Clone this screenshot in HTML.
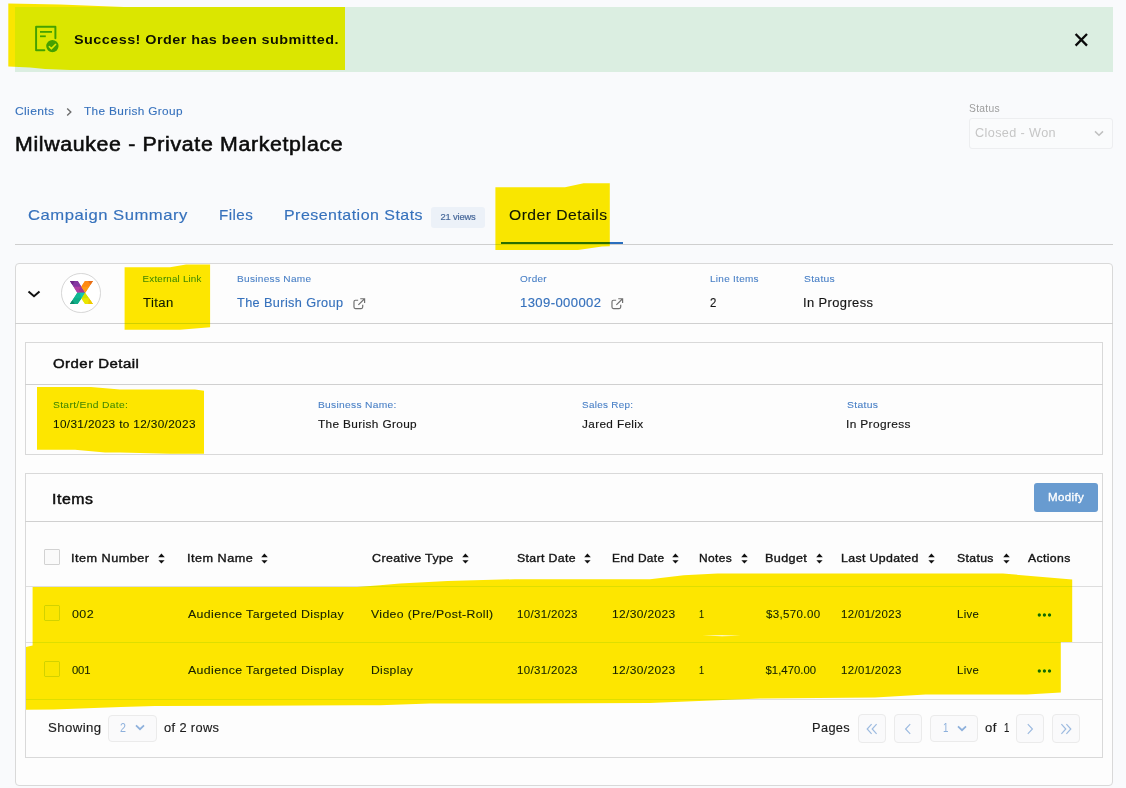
<!DOCTYPE html>
<html lang="en"><head><meta charset="utf-8"><title>Milwaukee - Private Marketplace</title>
<style>
html,body{margin:0;padding:0}
body{width:1126px;height:788px;position:relative;overflow:hidden;background:#f9fafc;font-family:"Liberation Sans",sans-serif;}
.t{position:absolute;white-space:nowrap;line-height:1;transform-origin:0 0;}
.b{position:absolute;box-sizing:border-box;}
.a{position:absolute;overflow:visible;}
.card{position:absolute;box-sizing:border-box;background:#fdfdfd;border:1px solid #d9d9d9;}
.ln{position:absolute;height:1px;background:#dedede;}
.cb{position:absolute;box-sizing:border-box;width:16px;height:16px;border:1px solid #d2d2d2;border-radius:1px;background:#fafafa;}
.pb{position:absolute;box-sizing:border-box;border:1px solid #ebebeb;border-radius:4px;background:#fafafb;}
</style></head><body>

<!-- success banner -->
<div class="b" style="left:15px;top:7px;width:1098px;height:65px;background:#dbeee1"></div>
<svg class="a" style="left:34px;top:24px" width="28" height="30" viewBox="0 0 28 30">
 <path d="M10.4 26.2 H2.1 V2.7 H21.4 V14.3" fill="none" stroke="#46a046" stroke-width="2" stroke-linejoin="round" stroke-linecap="round"/>
 <path d="M6 7.9 H18" stroke="#46a046" stroke-width="1.8"/><path d="M6 12.3 H11.8" stroke="#46a046" stroke-width="1.8"/>
 <circle cx="18.4" cy="22.1" r="6.2" fill="#46a046"/>
 <path d="M14.9 22.3 L17.4 24.6 L22 19.9" fill="none" stroke="#e4f3e6" stroke-width="1.5"/>
</svg>
<svg class="a" style="left:1074px;top:32px" width="15" height="15" viewBox="0 0 15 15"><path d="M1.6 2 L13 13.6 M13 2 L1.6 13.6" stroke="#0a0a0a" stroke-width="2.3" fill="none"/></svg>
<!-- breadcrumb chevron -->
<svg class="a" style="left:66px;top:107px" width="7" height="10" viewBox="0 0 7 10"><path d="M1.2 1.6 L4.8 5 L1.2 8.4" stroke="#6d6d6d" stroke-width="1.4" fill="none"/></svg>
<!-- status select -->
<div class="b" style="left:969px;top:118px;width:144px;height:31px;border:1px solid #edeef0;border-radius:3px;background:#fafbfc"></div>
<svg class="a" style="left:1094px;top:130px" width="10" height="7" viewBox="0 0 10 7"><path d="M1 1.4 L5 5.2 L9 1.4" stroke="#c0c0c0" stroke-width="1.5" fill="none"/></svg>
<!-- tabs -->
<div class="ln" style="left:15px;top:244px;width:1098px;background:#cfcfcf"></div>
<div class="b" style="left:431px;top:207px;width:54px;height:21px;border-radius:3px;background:#ecf1f8"></div>
<div class="b" style="left:501.3px;top:242px;width:121.6px;height:2.4px;background:#2a6ebe"></div>
<!-- order card -->
<div class="card" style="left:15px;top:263px;width:1098px;height:523px;border-radius:4px"></div>
<div class="ln" style="left:15px;top:323px;width:1098px;background:#d0d0d0"></div>
<svg class="a" style="left:27px;top:289px" width="14" height="9" viewBox="0 0 14 9"><path d="M1.5 2.4 L7 7.2 L12.5 2.4" stroke="#111" stroke-width="2" fill="none"/></svg>
<div class="b" style="left:61.3px;top:273.3px;width:39.6px;height:39.6px;border-radius:50%;border:1.6px solid #d6d6d6;background:#fff"></div>
<svg class="a" style="left:69.8px;top:280.9px" width="22.9" height="23.1" viewBox="0 0 100 100">
 <polygon points="0,0 34,0 65.5,50.5 32,50.5" fill="#9a3aa1"/>
 <polygon points="65.5,0 100,0 66.5,50.5 49.3,24.5" fill="#ff9012"/>
 <polygon points="32,50.5 65.5,50.5 33.3,100 0,100" fill="#11b38d"/>
 <polygon points="65.5,50.5 100,100 66,100 50,76" fill="#dde400"/>
 <polygon points="0,0 34,0 49.5,25 16,25" fill="#8436a0"/>
 <polygon points="0,0 21,0 10.5,16.5" fill="#6f2587"/>
 <polygon points="16,25 49.5,25 65.5,50.5 32,50.5" fill="#b03fa2"/>
 <polygon points="49.5,25 65.5,50.5 45,50.5 38,38" fill="#a5368f"/>
 <polygon points="65.5,0 100,0 83.5,25 49.3,24.5" fill="#ff8a12"/>
 <polygon points="79,0 100,0 89.5,16" fill="#e56d1c"/>
 <polygon points="49.3,24.5 83.5,25 66.5,50.5" fill="#ff9b12"/>
 <polygon points="32,50.5 65.5,50.5 50,76 16.5,75" fill="#12b893"/>
 <polygon points="42,50.5 65.5,50.5 50,76" fill="#10c5b5"/>
 <polygon points="16.5,75 50,76 33.3,100 0,100" fill="#10ae88"/>
 <polygon points="0,100 21,100 10.5,84" fill="#0a8c6c"/>
 <polygon points="65.5,50.5 83,75 50,76" fill="#d0e100"/>
 <polygon points="50,76 83,75 100,100 66,100" fill="#eae700"/>
 <polygon points="83,75 100,100 79,100" fill="#f1c700"/>
</svg>
<svg class="a ext" style="left:352.8px;top:298.2px" width="12.4" height="11.4" viewBox="0 0 13 12"><path d="M5.4 2.4 H2.6 Q1 2.4 1 4 V9.6 Q1 11.2 2.6 11.2 H8.6 Q10.2 11.2 10.2 9.6 V7.2 M7.6 0.8 H12.2 V5.2 M12.2 0.8 L5.6 7.2" stroke="#707070" stroke-width="1.25" fill="none"/></svg>
<svg class="a ext" style="left:611.1px;top:298.2px" width="12.4" height="11.4" viewBox="0 0 13 12"><path d="M5.4 2.4 H2.6 Q1 2.4 1 4 V9.6 Q1 11.2 2.6 11.2 H8.6 Q10.2 11.2 10.2 9.6 V7.2 M7.6 0.8 H12.2 V5.2 M12.2 0.8 L5.6 7.2" stroke="#707070" stroke-width="1.25" fill="none"/></svg>
<!-- order detail card -->
<div class="card" style="left:25px;top:342px;width:1078px;height:113px"></div>
<div class="ln" style="left:25px;top:384px;width:1078px;background:#d0d0d0"></div>
<!-- items card -->
<div class="card" style="left:25px;top:473px;width:1078px;height:285px"></div>
<div class="ln" style="left:25px;top:521px;width:1078px;background:#d0d0d0"></div>
<div class="b" style="left:1034px;top:483px;width:64px;height:29px;border-radius:3px;background:#689bd0"></div>
<div class="ln" style="left:26px;top:586px;width:1076px"></div>
<div class="ln" style="left:26px;top:642px;width:1076px"></div>
<div class="ln" style="left:26px;top:699px;width:1076px"></div>
<div class="cb" style="left:44px;top:549px"></div>
<div class="cb" style="left:44px;top:605px"></div>
<div class="cb" style="left:44px;top:661px"></div>
<!-- action dots -->
<svg class="a" style="left:1036.7px;top:612px" width="15" height="6" viewBox="0 0 15 6"><circle cx="2.3" cy="3" r="1.7" fill="#17680f"/><circle cx="7.4" cy="3" r="1.7" fill="#17680f"/><circle cx="12.5" cy="3" r="1.7" fill="#17680f"/></svg>
<svg class="a" style="left:1036.7px;top:668px" width="15" height="6" viewBox="0 0 15 6"><circle cx="2.3" cy="3" r="1.7" fill="#17680f"/><circle cx="7.4" cy="3" r="1.7" fill="#17680f"/><circle cx="12.5" cy="3" r="1.7" fill="#17680f"/></svg>
<!-- footer controls -->
<div class="pb" style="left:108px;top:715px;width:49px;height:27px"></div>
<svg class="a" style="left:134.5px;top:724px" width="10" height="7" viewBox="0 0 10 7"><path d="M1 1.3 L5 5.2 L9 1.3" stroke="#8db0dc" stroke-width="1.7" fill="none"/></svg>
<div class="pb" style="left:858px;top:714px;width:28px;height:29px"></div>
<div class="pb" style="left:894px;top:714px;width:28px;height:29px"></div>
<div class="pb" style="left:930px;top:715px;width:48px;height:27px"></div>
<div class="pb" style="left:1016px;top:714px;width:28px;height:29px"></div>
<div class="pb" style="left:1052px;top:714px;width:28px;height:29px"></div>
<svg class="a" style="left:866px;top:723px" width="12" height="12" viewBox="0 0 12 12"><path d="M5.6 1.2 L1.2 6 L5.6 10.8 M10.6 1.2 L6.2 6 L10.6 10.8" stroke="#9dbbe0" stroke-width="1.2" fill="none"/></svg>
<svg class="a" style="left:904px;top:723px" width="8" height="12" viewBox="0 0 8 12"><path d="M6.2 1.2 L1.6 6 L6.2 10.8" stroke="#9dbbe0" stroke-width="1.2" fill="none"/></svg>
<svg class="a" style="left:956.5px;top:724.5px" width="10" height="7" viewBox="0 0 10 7"><path d="M1 1.3 L5 5.2 L9 1.3" stroke="#8db0dc" stroke-width="1.7" fill="none"/></svg>
<svg class="a" style="left:1026px;top:723px" width="8" height="12" viewBox="0 0 8 12"><path d="M1.8 1.2 L6.4 6 L1.8 10.8" stroke="#9dbbe0" stroke-width="1.2" fill="none"/></svg>
<svg class="a" style="left:1060px;top:723px" width="12" height="12" viewBox="0 0 12 12"><path d="M1.4 1.2 L5.8 6 L1.4 10.8 M6.4 1.2 L10.8 6 L6.4 10.8" stroke="#9dbbe0" stroke-width="1.2" fill="none"/></svg>

<svg class="a" style="left:158.2px;top:552.5px" width="7" height="11.5" viewBox="0 0 7 11.5"><path d="M3.4 0.6 L6.8 4.2 H0.2 Z M0.4 7.3 H6.6 L3.4 10.5 Z" fill="#111"/></svg>
<svg class="a" style="left:261.1px;top:552.5px" width="7" height="11.5" viewBox="0 0 7 11.5"><path d="M3.4 0.6 L6.8 4.2 H0.2 Z M0.4 7.3 H6.6 L3.4 10.5 Z" fill="#111"/></svg>
<svg class="a" style="left:462.1px;top:552.5px" width="7" height="11.5" viewBox="0 0 7 11.5"><path d="M3.4 0.6 L6.8 4.2 H0.2 Z M0.4 7.3 H6.6 L3.4 10.5 Z" fill="#111"/></svg>
<svg class="a" style="left:583.6px;top:552.5px" width="7" height="11.5" viewBox="0 0 7 11.5"><path d="M3.4 0.6 L6.8 4.2 H0.2 Z M0.4 7.3 H6.6 L3.4 10.5 Z" fill="#111"/></svg>
<svg class="a" style="left:671.6px;top:552.5px" width="7" height="11.5" viewBox="0 0 7 11.5"><path d="M3.4 0.6 L6.8 4.2 H0.2 Z M0.4 7.3 H6.6 L3.4 10.5 Z" fill="#111"/></svg>
<svg class="a" style="left:741.0px;top:552.5px" width="7" height="11.5" viewBox="0 0 7 11.5"><path d="M3.4 0.6 L6.8 4.2 H0.2 Z M0.4 7.3 H6.6 L3.4 10.5 Z" fill="#111"/></svg>
<svg class="a" style="left:815.6px;top:552.5px" width="7" height="11.5" viewBox="0 0 7 11.5"><path d="M3.4 0.6 L6.8 4.2 H0.2 Z M0.4 7.3 H6.6 L3.4 10.5 Z" fill="#111"/></svg>
<svg class="a" style="left:927.8px;top:552.5px" width="7" height="11.5" viewBox="0 0 7 11.5"><path d="M3.4 0.6 L6.8 4.2 H0.2 Z M0.4 7.3 H6.6 L3.4 10.5 Z" fill="#111"/></svg>
<svg class="a" style="left:1002.5px;top:552.5px" width="7" height="11.5" viewBox="0 0 7 11.5"><path d="M3.4 0.6 L6.8 4.2 H0.2 Z M0.4 7.3 H6.6 L3.4 10.5 Z" fill="#111"/></svg>
<div class="t" style="left:73.5px;top:33px;font-size:13.5px;color:#111;letter-spacing:0.41px;font-weight:700;transform:scaleX(1.068);">Success! Order has been submitted.</div>
<div class="t" style="left:15.3px;top:106px;font-size:11.4px;color:#3671bc;letter-spacing:0.34px;transform:scaleX(1.060);-webkit-text-stroke:0.1px #3671bc;">Clients</div>
<div class="t" style="left:84.4px;top:106px;font-size:11.4px;color:#3671bc;letter-spacing:0.34px;transform:scaleX(1.037);-webkit-text-stroke:0.1px #3671bc;">The Burish Group</div>
<div class="t" style="left:14.9px;top:135px;font-size:19.5px;color:#0c0c0c;letter-spacing:0.59px;transform:scaleX(1.094);-webkit-text-stroke:0.55px #0c0c0c;">Milwaukee - Private Marketplace</div>
<div class="t" style="left:969.3px;top:104px;font-size:10.1px;color:#9d9d9d;letter-spacing:0.30px;transform:scaleX(1.020);">Status</div>
<div class="t" style="left:975.3px;top:128px;font-size:11.9px;color:#c6c6c6;letter-spacing:0.36px;transform:scaleX(1.064);">Closed - Won</div>
<div class="t" style="left:27.5px;top:208px;font-size:14.8px;color:#3671bc;letter-spacing:0.44px;transform:scaleX(1.126);-webkit-text-stroke:0.15px #3671bc;">Campaign Summary</div>
<div class="t" style="left:218.6px;top:208px;font-size:14.8px;color:#3671bc;letter-spacing:0.44px;transform:scaleX(1.025);-webkit-text-stroke:0.15px #3671bc;">Files</div>
<div class="t" style="left:283.7px;top:208px;font-size:14.8px;color:#3671bc;letter-spacing:0.44px;transform:scaleX(1.079);-webkit-text-stroke:0.15px #3671bc;">Presentation Stats</div>
<div class="t" style="left:440.4px;top:212px;font-size:9.4px;color:#48699b;letter-spacing:-0.16px;-webkit-text-stroke:0.2px #48699b;">21 views</div>
<div class="t" style="left:509.2px;top:208px;font-size:14.8px;color:#141414;letter-spacing:0.44px;transform:scaleX(1.061);-webkit-text-stroke:0.15px #141414;">Order Details</div>
<div class="t" style="left:142.6px;top:274px;font-size:9.8px;color:#4a80c6;letter-spacing:0.18px;-webkit-text-stroke:0.1px #4a80c6;">External Link</div>
<div class="t" style="left:237.0px;top:274px;font-size:9.8px;color:#4a80c6;letter-spacing:0.29px;transform:scaleX(1.028);-webkit-text-stroke:0.1px #4a80c6;">Business Name</div>
<div class="t" style="left:520.2px;top:274px;font-size:9.8px;color:#4a80c6;letter-spacing:0.29px;transform:scaleX(1.016);-webkit-text-stroke:0.1px #4a80c6;">Order</div>
<div class="t" style="left:709.6px;top:274px;font-size:9.8px;color:#4a80c6;letter-spacing:0.29px;transform:scaleX(1.016);-webkit-text-stroke:0.1px #4a80c6;">Line Items</div>
<div class="t" style="left:803.7px;top:274px;font-size:9.8px;color:#4a80c6;letter-spacing:0.29px;transform:scaleX(1.053);-webkit-text-stroke:0.1px #4a80c6;">Status</div>
<div class="t" style="left:142.6px;top:297px;font-size:12.5px;color:#161616;letter-spacing:0.38px;transform:scaleX(1.049);-webkit-text-stroke:0.15px #161616;">Titan</div>
<div class="t" style="left:237.0px;top:297px;font-size:12.5px;color:#3671bc;letter-spacing:0.38px;transform:scaleX(1.016);-webkit-text-stroke:0.15px #3671bc;">The Burish Group</div>
<div class="t" style="left:520.2px;top:297px;font-size:12.5px;color:#3671bc;letter-spacing:0.38px;transform:scaleX(1.045);-webkit-text-stroke:0.15px #3671bc;">1309-000002</div>
<div class="t" style="left:709.6px;top:297px;font-size:12.5px;color:#161616;transform:scaleX(0.914);-webkit-text-stroke:0.15px #161616;">2</div>
<div class="t" style="left:802.7px;top:297px;font-size:12.5px;color:#161616;letter-spacing:0.38px;transform:scaleX(1.033);-webkit-text-stroke:0.15px #161616;">In Progress</div>
<div class="t" style="left:53.2px;top:357px;font-size:13.7px;color:#0e0e0e;letter-spacing:0.41px;transform:scaleX(1.096);-webkit-text-stroke:0.45px #0e0e0e;">Order Detail</div>
<div class="t" style="left:53.0px;top:400px;font-size:9.8px;color:#4a80c6;letter-spacing:0.29px;transform:scaleX(1.054);-webkit-text-stroke:0.1px #4a80c6;">Start/End Date:</div>
<div class="t" style="left:318.0px;top:400px;font-size:9.8px;color:#4a80c6;letter-spacing:0.29px;transform:scaleX(1.044);-webkit-text-stroke:0.1px #4a80c6;">Business Name:</div>
<div class="t" style="left:582.1px;top:400px;font-size:9.8px;color:#4a80c6;letter-spacing:0.29px;transform:scaleX(1.009);-webkit-text-stroke:0.1px #4a80c6;">Sales Rep:</div>
<div class="t" style="left:846.6px;top:400px;font-size:9.8px;color:#4a80c6;letter-spacing:0.29px;transform:scaleX(1.060);-webkit-text-stroke:0.1px #4a80c6;">Status</div>
<div class="t" style="left:53.0px;top:419px;font-size:11.3px;color:#161616;letter-spacing:0.34px;transform:scaleX(1.043);-webkit-text-stroke:0.15px #161616;">10/31/2023 to 12/30/2023</div>
<div class="t" style="left:318.0px;top:419px;font-size:11.3px;color:#161616;letter-spacing:0.34px;transform:scaleX(1.047);-webkit-text-stroke:0.15px #161616;">The Burish Group</div>
<div class="t" style="left:582.0px;top:419px;font-size:11.3px;color:#161616;letter-spacing:0.34px;transform:scaleX(1.043);-webkit-text-stroke:0.15px #161616;">Jared Felix</div>
<div class="t" style="left:845.5px;top:419px;font-size:11.3px;color:#161616;letter-spacing:0.34px;transform:scaleX(1.054);-webkit-text-stroke:0.15px #161616;">In Progress</div>
<div class="t" style="left:52.1px;top:493px;font-size:13.8px;color:#0e0e0e;letter-spacing:0.49px;transform:scaleX(1.150);-webkit-text-stroke:0.45px #0e0e0e;">Items</div>
<div class="t" style="left:1047.6px;top:492px;font-size:10.9px;color:#fff;letter-spacing:0.33px;transform:scaleX(1.062);-webkit-text-stroke:0.3px #fff;">Modify</div>
<div class="t" style="left:70.5px;top:553px;font-size:11.0px;color:#141414;letter-spacing:0.42px;transform:scaleX(1.150);-webkit-text-stroke:0.35px #141414;">Item Number</div>
<div class="t" style="left:186.5px;top:553px;font-size:11.0px;color:#141414;letter-spacing:0.43px;transform:scaleX(1.150);-webkit-text-stroke:0.35px #141414;">Item Name</div>
<div class="t" style="left:371.5px;top:553px;font-size:11.0px;color:#141414;letter-spacing:0.33px;transform:scaleX(1.135);-webkit-text-stroke:0.35px #141414;">Creative Type</div>
<div class="t" style="left:516.6px;top:553px;font-size:11.0px;color:#141414;letter-spacing:0.33px;transform:scaleX(1.117);-webkit-text-stroke:0.35px #141414;">Start Date</div>
<div class="t" style="left:611.5px;top:553px;font-size:11.0px;color:#141414;letter-spacing:0.33px;transform:scaleX(1.082);-webkit-text-stroke:0.35px #141414;">End Date</div>
<div class="t" style="left:698.7px;top:553px;font-size:11.0px;color:#141414;letter-spacing:0.33px;transform:scaleX(1.087);-webkit-text-stroke:0.35px #141414;">Notes</div>
<div class="t" style="left:765.0px;top:553px;font-size:11.0px;color:#141414;letter-spacing:0.33px;transform:scaleX(1.144);-webkit-text-stroke:0.35px #141414;">Budget</div>
<div class="t" style="left:841.0px;top:553px;font-size:11.0px;color:#141414;letter-spacing:0.33px;transform:scaleX(1.121);-webkit-text-stroke:0.35px #141414;">Last Updated</div>
<div class="t" style="left:957.0px;top:553px;font-size:11.0px;color:#141414;letter-spacing:0.33px;transform:scaleX(1.110);-webkit-text-stroke:0.35px #141414;">Status</div>
<div class="t" style="left:1028.0px;top:553px;font-size:11.0px;color:#141414;letter-spacing:0.33px;transform:scaleX(1.110);-webkit-text-stroke:0.35px #141414;">Actions</div>
<div class="t" style="left:71.9px;top:609px;font-size:11.3px;color:#1c1c1c;letter-spacing:0.34px;transform:scaleX(1.107);-webkit-text-stroke:0.15px #1c1c1c;">002</div>
<div class="t" style="left:187.7px;top:609px;font-size:11.3px;color:#1c1c1c;letter-spacing:0.34px;transform:scaleX(1.094);-webkit-text-stroke:0.15px #1c1c1c;">Audience Targeted Display</div>
<div class="t" style="left:371.3px;top:609px;font-size:11.3px;color:#1c1c1c;letter-spacing:0.34px;transform:scaleX(1.083);-webkit-text-stroke:0.15px #1c1c1c;">Video (Pre/Post-Roll)</div>
<div class="t" style="left:516.6px;top:609px;font-size:11.3px;color:#1c1c1c;letter-spacing:0.34px;transform:scaleX(1.015);-webkit-text-stroke:0.15px #1c1c1c;">10/31/2023</div>
<div class="t" style="left:611.6px;top:609px;font-size:11.3px;color:#1c1c1c;letter-spacing:0.34px;transform:scaleX(1.061);-webkit-text-stroke:0.15px #1c1c1c;">12/30/2023</div>
<div class="t" style="left:698.5px;top:609px;font-size:11.3px;color:#1c1c1c;transform:scaleX(0.800);-webkit-text-stroke:0.15px #1c1c1c;">1</div>
<div class="t" style="left:765.5px;top:609px;font-size:11.3px;color:#1c1c1c;letter-spacing:0.34px;transform:scaleX(1.021);-webkit-text-stroke:0.15px #1c1c1c;">$3,570.00</div>
<div class="t" style="left:841.0px;top:609px;font-size:11.3px;color:#1c1c1c;letter-spacing:0.34px;transform:scaleX(1.012);-webkit-text-stroke:0.15px #1c1c1c;">12/01/2023</div>
<div class="t" style="left:957.1px;top:609px;font-size:11.3px;color:#1c1c1c;letter-spacing:0.29px;-webkit-text-stroke:0.15px #1c1c1c;">Live</div>
<div class="t" style="left:71.9px;top:665px;font-size:11.3px;color:#1c1c1c;letter-spacing:-0.13px;-webkit-text-stroke:0.15px #1c1c1c;">001</div>
<div class="t" style="left:187.7px;top:665px;font-size:11.3px;color:#1c1c1c;letter-spacing:0.34px;transform:scaleX(1.094);-webkit-text-stroke:0.15px #1c1c1c;">Audience Targeted Display</div>
<div class="t" style="left:371.3px;top:665px;font-size:11.3px;color:#1c1c1c;letter-spacing:0.34px;transform:scaleX(1.070);-webkit-text-stroke:0.15px #1c1c1c;">Display</div>
<div class="t" style="left:516.6px;top:665px;font-size:11.3px;color:#1c1c1c;letter-spacing:0.34px;transform:scaleX(1.015);-webkit-text-stroke:0.15px #1c1c1c;">10/31/2023</div>
<div class="t" style="left:611.6px;top:665px;font-size:11.3px;color:#1c1c1c;letter-spacing:0.34px;transform:scaleX(1.061);-webkit-text-stroke:0.15px #1c1c1c;">12/30/2023</div>
<div class="t" style="left:698.5px;top:665px;font-size:11.3px;color:#1c1c1c;transform:scaleX(0.800);-webkit-text-stroke:0.15px #1c1c1c;">1</div>
<div class="t" style="left:765.5px;top:665px;font-size:11.3px;color:#1c1c1c;letter-spacing:0.04px;-webkit-text-stroke:0.15px #1c1c1c;">$1,470.00</div>
<div class="t" style="left:841.0px;top:665px;font-size:11.3px;color:#1c1c1c;letter-spacing:0.34px;transform:scaleX(1.012);-webkit-text-stroke:0.15px #1c1c1c;">12/01/2023</div>
<div class="t" style="left:957.1px;top:665px;font-size:11.3px;color:#1c1c1c;letter-spacing:0.29px;-webkit-text-stroke:0.15px #1c1c1c;">Live</div>
<div class="t" style="left:48.1px;top:722px;font-size:12.1px;color:#1c1c1c;letter-spacing:0.36px;transform:scaleX(1.093);-webkit-text-stroke:0.15px #1c1c1c;">Showing</div>
<div class="t" style="left:120.4px;top:722px;font-size:12.1px;color:#8db0dc;transform:scaleX(0.886);">2</div>
<div class="t" style="left:164.2px;top:722px;font-size:12.1px;color:#1c1c1c;letter-spacing:0.36px;transform:scaleX(1.059);-webkit-text-stroke:0.15px #1c1c1c;">of 2 rows</div>
<div class="t" style="left:812.3px;top:722px;font-size:12.1px;color:#1c1c1c;letter-spacing:0.36px;transform:scaleX(1.056);-webkit-text-stroke:0.15px #1c1c1c;">Pages</div>
<div class="t" style="left:942.9px;top:722px;font-size:12.1px;color:#8db0dc;transform:scaleX(0.800);">1</div>
<div class="t" style="left:985.3px;top:722px;font-size:12.1px;color:#1c1c1c;letter-spacing:0.36px;transform:scaleX(1.082);-webkit-text-stroke:0.15px #1c1c1c;">of</div>
<div class="t" style="left:1004.3px;top:722px;font-size:12.1px;color:#1c1c1c;transform:scaleX(0.800);-webkit-text-stroke:0.15px #1c1c1c;">1</div>
<!-- highlighter marks -->
<svg class="a" style="left:0;top:0;mix-blend-mode:darken;pointer-events:none" width="1126" height="788" viewBox="0 0 1126 788">
 <g fill="#fde600">
  <path d="M8.3 3.6 L60 4.5 L124 6.9 L345 6.9 L345 70 L70 70 L45 69 L30 67.6 L8.3 66.5 Z"/>
  <path d="M495.4 187.3 L565 187.3 L583.6 183.3 L609.8 183.3 L609.8 246.3 L602 246.6 L578 249.9 L495.4 249.9 Z"/>
  <path d="M124.6 267.2 L170 267.2 L186 264.6 L210.1 264.6 L210.1 327.3 L180 329.8 L124.6 329.8 Z"/>
  <path d="M37 386.9 L91 387 L120 389.6 L195 389.6 L204 390.7 L204 453.8 L170 453.8 L120 452.6 L105 452.5 L75 449.8 L37 449.8 Z"/>
  <path d="M32.6 587 L357 587 L380 585.3 L400 583.6 L447.5 581 L515 579.2 L650 579.2 L683.7 575.2 L717.5 573.5 L1003 573.5 L1072.2 579.6 L1072.2 642 L1060.8 642 L1060.8 692.5 L1027 694.5 L925.6 694.5 L875 697.5 L760 698.6 L717 700.2 L650 703 L430 703.6 L380 705.3 L357 705.3 L155 706 L121 707 L53.7 709.5 L26 709.7 L26 647 L32.6 645.6 Z M702 635.6 L722 635.3 L741 635.8 L722 636.2 Z" fill-rule="evenodd"/>
 </g>
</svg>

</body></html>
